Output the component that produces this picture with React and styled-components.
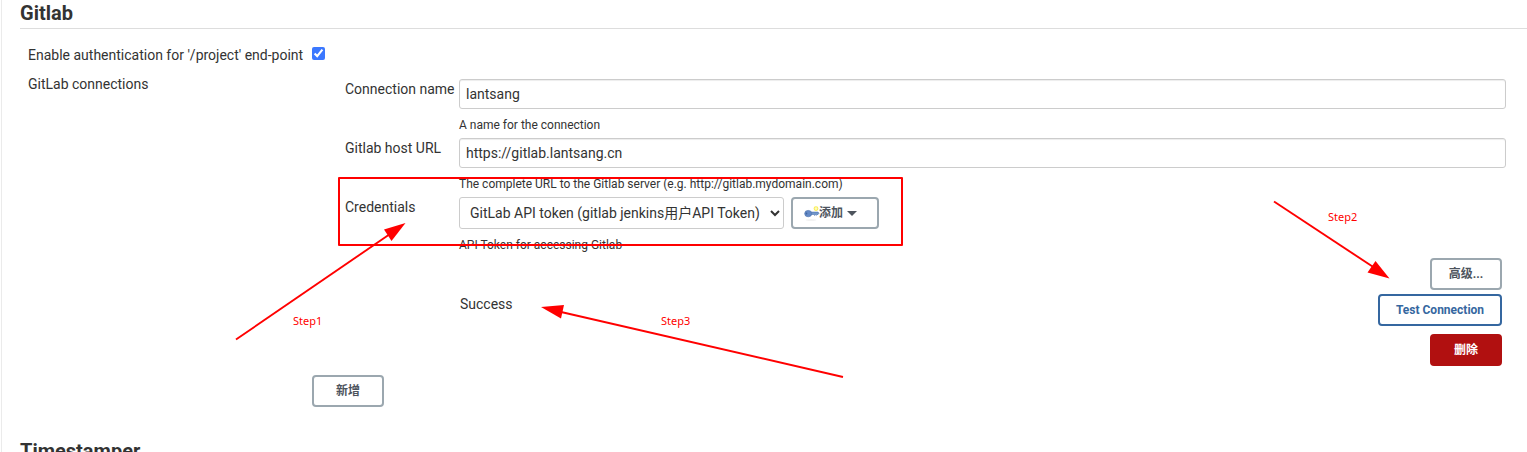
import React from "react";
import styled, { createGlobalStyle, css } from "styled-components";

const GlobalStyle = createGlobalStyle`
  *, *::before, *::after { box-sizing: border-box; }
  body {
    margin: 0;
    overflow: hidden;
    background: #fff;
    color: #333;
    font: 14px/20px Roboto, "Noto Sans CJK SC", sans-serif;
  }
`;

const Page = styled.main`
  position: relative;
  height: 452px;
  overflow: hidden;
  margin-left: 1px;
  padding-left: 18px;
  border-left: 1px solid #ebebeb;
`;

const SectionTitle = styled.h2`
  margin: 0;
  height: 29px;
  padding-top: 1px;
  border-bottom: 1px solid #ddd;
  font-size: 20px;
  line-height: 24px;
  font-weight: 700;
`;

const SectionBody = styled.div`
  height: 409px;
  padding: 16px 21px 0 8px;
`;

const CheckRow = styled.label`
  display: flex;
  align-items: flex-start;
  gap: 9px;
  height: 34px;
`;

const CheckText = styled.span`
  white-space: nowrap;
`;

const Checkbox = styled.input`
  width: 13px;
  height: 13px;
  margin: 2px 0 0;
  accent-color: #3b78ff;
`;

const Connections = styled.div`
  display: grid;
  grid-template-columns: 284px 1fr;
`;

const ConnectionsLabel = styled.div`
  margin-top: -5px;
`;

const ConnectionPanel = styled.div`
  display: flex;
  flex-direction: column;
`;

const Field = styled.div`
  display: grid;
  grid-template-columns: 114px 1fr;
  margin-left: 33px;
  height: ${(p) => p.$height || 59}px;
`;

const FieldLabel = styled.label`
  white-space: nowrap;
`;

const TextInput = styled.input`
  display: block;
  width: 100%;
  height: 30px;
  padding: 0 6px;
  border: 1px solid #ccc;
  border-radius: 3px;
  background: #fff;
  box-shadow: inset 0 1px 1px rgba(0, 0, 0, 0.075);
  color: #333;
  font: inherit;
  outline: none;
`;

const Help = styled.div`
  margin-top: 8px;
  font-size: 12px;
  line-height: 16px;
`;

const ControlLine = styled.div`
  display: flex;
  gap: 7px;
`;

const Select = styled.select`
  width: 325px;
  height: 32px;
  padding: 0 0 0 6px;
  border: 1px solid #ccc;
  border-radius: 3px;
  background: #fff;
  color: #333;
  font: inherit;
`;

const tones = {
  plain: css`
    border-color: #9ba7af;
    background: #fff;
    color: #4d545d;
  `,
  primary: css`
    border-color: #3567a0;
    background: #fff;
    color: #3567a0;
  `,
  danger: css`
    border-color: #b11010;
    background: #b11010;
    color: #fff;
  `,
};

const Button = styled.button`
  display: inline-flex;
  align-items: center;
  justify-content: center;
  width: ${(p) => p.$width || 72}px;
  height: 32px;
  padding: 0 0 1px;
  border: 2px solid;
  border-radius: 4px;
  font: 700 12px/16px Roboto, "Noto Sans CJK SC", sans-serif;
  white-space: nowrap;
  ${(p) => tones[p.$tone || "plain"]}
`;

const AddButton = styled(Button)`
  justify-content: flex-start;
  padding-left: 11px;

  svg {
    margin-right: -1px;
  }
`;

const Caret = styled.span`
  margin: 1px 0 0 4px;
  border: 5px solid transparent;
  border-top-color: #4d545d;
  border-bottom: 0;
`;

const Actions = styled.div`
  display: flex;
  flex-direction: column;
  align-items: flex-end;
  padding-right: 4px;
`;

const ResultLine = styled.div`
  display: flex;
  justify-content: space-between;
  align-self: stretch;
  margin: 4px 0 8px 148px;
`;

const AddRow = styled.div`
  margin: 9px 0 0 284px;
`;

const Overlay = styled.div`
  position: absolute;
  inset: 0 0 0 -2px;
  pointer-events: none;
  color: #f00;
`;

const Highlight = styled.div`
  position: absolute;
  left: 338px;
  top: 177px;
  width: 565px;
  height: 69px;
  border: 2px solid #f00;
  border-radius: 1px;
`;

const Arrows = styled.svg`
  position: absolute;
  left: 0;
  top: 0;
`;

const StepNote = styled.span`
  position: absolute;
  left: ${(p) => p.$x}px;
  top: ${(p) => p.$y}px;
  font: 11px/14px "Noto Sans", sans-serif;
`;

function KeyIcon() {
  return (
    <svg width="16" height="16" viewBox="0 0 16 16" aria-hidden="true">
      <ellipse cx="7" cy="15" rx="5.5" ry=".8" fill="#eee" />
      <circle cx="12" cy="3.6" r="1.9" fill="#fffbb8" stroke="#f8ee58" strokeWidth="1.1" />
      <path d="M6.500 7.100H14l1 1.100-1 1.300h-1l-.7.9-1-.9-.9.9-.9-.9h-3z" fill="#7297cb" stroke="#4b70aa" strokeWidth=".6" />
      <ellipse cx="4.200" cy="8.600" rx="3.500" ry="3.200" fill="#6389c6" stroke="#5378b2" strokeWidth=".7" />
      <ellipse cx="2.500" cy="8.600" rx=".8" ry="1" fill="#3f659f" />
    </svg>
  );
}

function Annotations() {
  return (
    <Overlay>
      <Highlight />
      <Arrows width="1527" height="452" viewBox="0 0 1527 452" fill="#f00" stroke="#f00" strokeWidth="1.9">
        <path d="M236 339.5 390 234" />
        <path d="M405.5 223 384 229.5 391.5 241z" stroke="none" />
        <path d="M1274 201.5 1374 267.5" />
        <path d="M1389.5 278.5 1375.5 261 1367.5 272.5z" stroke="none" />
        <path d="M843 377 560 311.8" />
        <path d="M541 307 564 305 561 318.5z" stroke="none" />
      </Arrows>
      <StepNote $x={293} $y={314}>Step1</StepNote>
      <StepNote $x={1328} $y={210}>Step2</StepNote>
      <StepNote $x={661} $y={314}>Step3</StepNote>
    </Overlay>
  );
}

export default function App() {
  return (
    <>
      <GlobalStyle />
      <Page>
        <SectionTitle>Gitlab</SectionTitle>
        <SectionBody>
          <CheckRow>
            <CheckText>Enable authentication for '/project' end-point</CheckText>
            <Checkbox type="checkbox" defaultChecked />
          </CheckRow>
          <Connections>
            <ConnectionsLabel>GitLab connections</ConnectionsLabel>
            <ConnectionPanel>
              <Field>
                <FieldLabel>Connection name</FieldLabel>
                <div>
                  <TextInput defaultValue="lantsang" />
                  <Help>A name for the connection</Help>
                </div>
              </Field>
              <Field>
                <FieldLabel>Gitlab host URL</FieldLabel>
                <div>
                  <TextInput defaultValue="https://gitlab.lantsang.cn" />
                  <Help>The complete URL to the Gitlab server (e.g. http://gitlab.mydomain.com)</Help>
                </div>
              </Field>
              <Field $height={61}>
                <FieldLabel>Credentials</FieldLabel>
                <div>
                  <ControlLine>
                    <Select>
                      <option>GitLab API token (gitlab jenkins用户API Token)</option>
                    </Select>
                    <AddButton $width={88}>
                      <KeyIcon />
                      添加
                      <Caret />
                    </AddButton>
                  </ControlLine>
                  <Help>API Token for accessing Gitlab</Help>
                </div>
              </Field>
              <Actions>
                <Button>高级...</Button>
                <ResultLine>
                  <span>Success</span>
                  <Button $width={124} $tone="primary">Test Connection</Button>
                </ResultLine>
                <Button $tone="danger">删除</Button>
              </Actions>
            </ConnectionPanel>
          </Connections>
          <AddRow>
            <Button>新增</Button>
          </AddRow>
        </SectionBody>
        <SectionTitle>Timestamper</SectionTitle>
        <Annotations />
      </Page>
    </>
  );
}
